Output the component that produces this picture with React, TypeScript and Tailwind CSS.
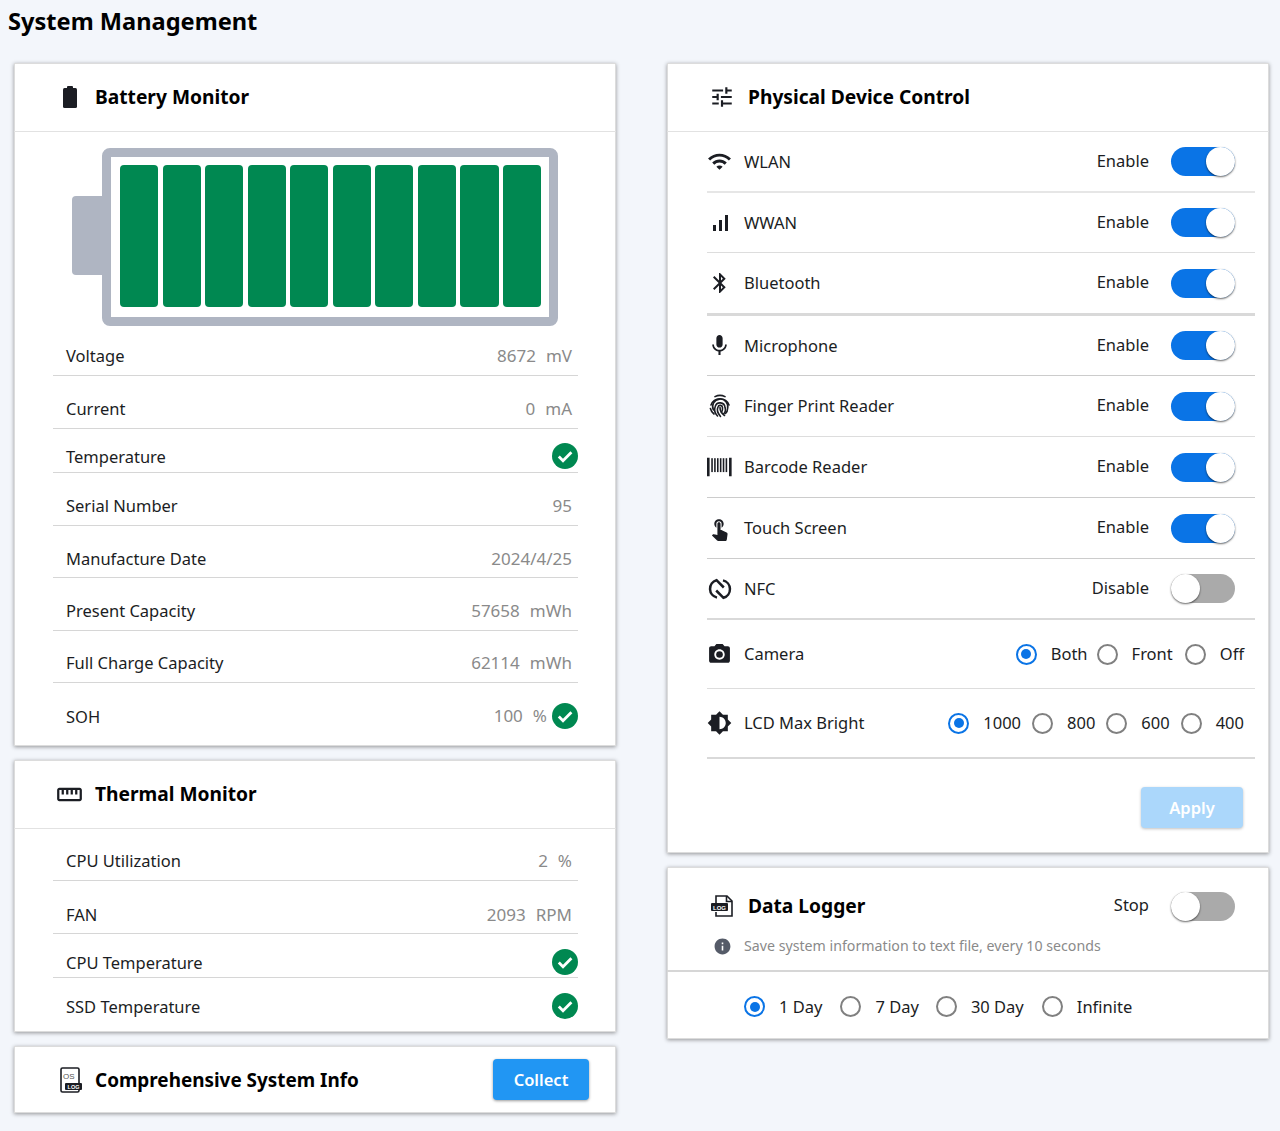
import type { ReactNode } from "react";
import {
  MdBluetooth,
  MdBrightnessMedium,
  MdInfo,
  MdMic,
  MdOutlineStraighten,
  MdPhotoCamera,
  MdSignalCellularAlt,
  MdTouchApp,
  MdTune,
  MdWifi,
} from "react-icons/md";

const BatteryIcon = () => (
  <svg width="16" height="22" viewBox="0 0 16 22" fill="#1b1d23">
    <rect x="5" y="0" width="6" height="4" rx="1" />
    <rect x="1" y="2" width="14" height="20" rx="1.5" />
  </svg>
);

const BarcodeIcon = () => (
  <svg width="27" height="20" viewBox="0 0 27 20" fill="#1b1d23">
    <rect x="0" y="0" width="2.8" height="20" />
    <rect x="4.6" y="0.5" width="1.7" height="15" />
    <rect x="7.7" y="0.5" width="1.7" height="15" />
    <rect x="10.8" y="0.5" width="1.7" height="15" />
    <rect x="13.9" y="0.5" width="1.7" height="15" />
    <rect x="17" y="0.5" width="1.7" height="15" />
    <rect x="20.1" y="0.5" width="1.7" height="15" />
    <rect x="23.8" y="0" width="2.8" height="20" />
  </svg>
);

const FingerprintIcon = () => (
  <svg width="24" height="24" viewBox="0 0 24 24" fill="none" stroke="#1b1d23" strokeWidth="1.6" strokeLinecap="round">
    <path d="M7 2.6A11 11 0 0 1 17 2.6" />
    <path d="M3 11A9.6 9.6 0 0 1 21 11" />
    <path d="M2.4 14.5A10 10 0 0 0 6 20" />
    <path d="M5.4 16A7.6 7.6 0 1 1 19.6 14.5A7 7 0 0 1 17.5 19.5" />
    <path d="M9.5 22A9 9 0 0 1 7.2 12.5A5 5 0 0 1 17 13.5A6 6 0 0 1 15.5 20" />
    <path d="M12.5 22.5C9.5 19 9 15 10 13A2.3 2.3 0 0 1 14.5 13.5C14.8 16 14 17.5 13.5 18.5" />
    <path d="M12 13.5C12 16.5 13.5 19.5 16.5 21.5" />
  </svg>
);

const NfcIcon = () => (
  <svg width="24" height="24" viewBox="0 0 24 24" fill="none" stroke="#1b1d23" strokeWidth="2.5">
    <path d="M9 20.6A9 9 0 0 1 8.5 3.2L15.8 10.5" />
    <path d="M15 3.4A9 9 0 0 1 15.5 20.8L8.2 13.5" />
  </svg>
);

const LogFileIcon = () => (
  <svg width="24" height="24" viewBox="0 0 24 24">
    <path d="M5 9V2h11l5 5v15H5v-4" fill="none" stroke="#1b1d23" strokeWidth="1.6" />
    <path d="M15.5 2v5.5H21" fill="none" stroke="#1b1d23" strokeWidth="1.6" />
    <rect x="0" y="9" width="17" height="8" rx="1" fill="#1b1d23" />
    <text x="8.5" y="15.5" fontSize="6" fontWeight="700" textAnchor="middle" fill="#fff" fontFamily="Liberation Sans, sans-serif">
      LOG
    </text>
  </svg>
);

const OsLogIcon = () => (
  <svg width="24" height="26" viewBox="0 0 24 26">
    <rect x="3" y="1" width="18" height="24" rx="1.5" fill="none" stroke="#1b1d23" strokeWidth="1.6" />
    <text x="5" y="12" fontSize="8" textAnchor="start" fill="#555" fontFamily="Liberation Sans, sans-serif">
      OS
    </text>
    <rect x="7" y="16" width="17" height="7" rx="1" fill="#1b1d23" />
    <text x="15.5" y="21.6" fontSize="5.5" fontWeight="700" textAnchor="middle" fill="#fff" fontFamily="Liberation Sans, sans-serif">
      LOG
    </text>
  </svg>
);

const Check = () => (
  <svg width="26" height="26" viewBox="0 0 26 26" className="shrink-0">
    <circle cx="13" cy="13" r="13" fill="#008851" />
    <path d="M6.8 13.6l4.2 4.2 8.4-8.6" fill="none" stroke="#fff" strokeWidth="2.8" />
  </svg>
);

const Switch = ({ on }: { on: boolean }) => (
  <div className={`flex h-[29px] w-[64px] items-center rounded-full ${on ? "justify-end bg-[#0a74e6]" : "justify-start bg-[#aaaaaa]"}`}>
    <div className="h-[29px] w-[29px] rounded-full bg-white shadow-[0_1px_2px_rgba(0,0,0,0.6)]" />
  </div>
);

const Radio = ({ on, label, className }: { on?: boolean; label: string; className: string }) => (
  <div className={`flex items-center ${className}`}>
    <div className={`flex h-[21px] w-[21px] items-center justify-center rounded-full border-[2.5px] ${on ? "border-[#0a74e6]" : "border-[#808080]"}`}>
      {on && <div className="h-[10px] w-[10px] rounded-full bg-[#0a74e6]" />}
    </div>
    <span className="ml-[14px] text-[#1b1d23]">{label}</span>
  </div>
);

const Card = ({ className, children }: { className: string; children: ReactNode }) => (
  <section className={`bg-white shadow-[inset_0_0_0_1px_#dcdcdc,0_1px_4px_rgba(0,0,0,0.4)] ${className}`}>{children}</section>
);

const CardHeader = ({ icon, title, iconClass }: { icon: ReactNode; title: string; iconClass: string }) => (
  <div className="flex h-[69px] items-center border-b border-[#e2e2e2]">
    <div className={`flex items-center justify-center ${iconClass}`}>{icon}</div>
    <h2 className="text-[19.2px] font-bold text-black">{title}</h2>
  </div>
);

type StatRow = { label: string; value?: string; unit?: string; check?: boolean; box: string };

const batteryRows: StatRow[] = [
  { label: "Voltage", value: "8672", unit: "mV", box: "h-[50px] pb-[7px]" },
  { label: "Current", value: "0", unit: "mA", box: "h-[53px] pb-[7px]" },
  { label: "Temperature", check: true, box: "h-[44px] pb-[3px]" },
  { label: "Serial Number", value: "95", box: "h-[53px] pb-[7px]" },
  { label: "Manufacture Date", value: "2024/4/25", box: "h-[52px] pb-[6px]" },
  { label: "Present Capacity", value: "57658", unit: "mWh", box: "h-[53px] pb-[7px]" },
  { label: "Full Charge Capacity", value: "62114", unit: "mWh", box: "h-[52px] pb-[7px]" },
];

const thermalRows: StatRow[] = [
  { label: "CPU Utilization", value: "2", unit: "%", box: "h-[52px] pb-[7px]" },
  { label: "FAN", value: "2093", unit: "RPM", box: "h-[53px] pb-[6px]" },
  { label: "CPU Temperature", check: true, box: "h-[44px] pb-[2px]" },
];

const Stat = ({ row }: { row: StatRow }) => (
  <div className={`flex items-end justify-between border-b border-[#d6d6d6] pl-[13px] ${row.box}`}>
    <span className="text-[#1b1d23]">{row.label}</span>
    {row.check ? (
      <Check />
    ) : (
      <span className="flex gap-[10px] pr-[6px] text-[17px] text-[#8a8a8a]">
        <span>{row.value}</span>
        {row.unit && <span>{row.unit}</span>}
      </span>
    )}
  </div>
);

const Battery = () => (
  <div className="flex items-center pl-[58px] pt-[16px]">
    <div className="mb-[3px] h-[79px] w-[30px] rounded-l-[4px] bg-[#afb5c2]" />
    <div className="h-[178px] w-[456px] rounded-[8px] border-[9px] border-[#afb5c2] pb-[10px] pl-[9px] pr-[8px] pt-[8px]">
      <div className="flex h-full gap-[4.4px]">
        {Array.from({ length: 10 }).map((_, i) => (
          <div key={i} className="flex-1 rounded-[4px] bg-[#008851]" />
        ))}
      </div>
    </div>
  </div>
);

type DeviceRow = { icon: ReactNode; label: string; on: boolean; box: string };

const devices: DeviceRow[] = [
  { icon: <MdWifi size={25} />, label: "WLAN", on: true, box: "h-[61px] border-b-2 border-[#e6e6e6]" },
  { icon: <MdSignalCellularAlt size={24} />, label: "WWAN", on: true, box: "h-[60px] border-b border-[#dddddd]" },
  { icon: <MdBluetooth size={24} />, label: "Bluetooth", on: true, box: "h-[63px] border-b-[3px] border-[#d9d9d9]" },
  { icon: <MdMic size={25} />, label: "Microphone", on: true, box: "h-[60px] border-b border-[#cccccc]" },
  { icon: <FingerprintIcon />, label: "Finger Print Reader", on: true, box: "h-[61px] border-b border-[#dddddd]" },
  { icon: <BarcodeIcon />, label: "Barcode Reader", on: true, box: "h-[61px] border-b border-[#cccccc]" },
  { icon: <MdTouchApp size={25} />, label: "Touch Screen", on: true, box: "h-[61px] border-b border-[#cccccc]" },
  { icon: <NfcIcon />, label: "NFC", on: false, box: "h-[61px] border-b-2 border-[#d9d9d9]" },
];

const DeviceLabel = ({ icon, label }: { icon: ReactNode; label: string }) => (
  <>
    <div className="flex w-[37px] justify-start text-[#1b1d23]">
      <div className="flex w-[25px] justify-center">{icon}</div>
    </div>
    <span className="text-[#1b1d23]">{label}</span>
  </>
);

export default function App() {
  return (
    <div className="min-h-[1131px] bg-[#f3f6fb] font-['Noto_Sans',sans-serif] text-[16.5px] leading-[24px]">
      <h1 className="h-[63px] pl-2 pt-[4px] text-[23.6px] font-bold leading-[34px] text-black">System Management</h1>
      <div className="flex pl-[14px] pr-[11px]">
        <div className="flex w-[602px] flex-col gap-[14px]">
          <Card className="h-[683px]">
            <CardHeader icon={<BatteryIcon />} title="Battery Monitor" iconClass="w-[81px] pl-[30px]" />
            <Battery />
            <div className="pl-[39px] pr-[38px]">
              {batteryRows.map((row) => (
                <Stat key={row.label} row={row} />
              ))}
              <div className="flex h-[63px] items-center justify-between pl-[13px] pt-[2px]">
                <span className="pt-[2px] text-[#1b1d23]">SOH</span>
                <div className="flex items-center gap-[5px] text-[17px] text-[#8a8a8a]">
                  <span className="flex gap-[10px]">
                    <span>100</span>
                    <span>%</span>
                  </span>
                  <Check />
                </div>
              </div>
            </div>
          </Card>
          <Card className="h-[272px]">
            <CardHeader icon={<MdOutlineStraighten size={27} color="#1b1d23" />} title="Thermal Monitor" iconClass="w-[81px] pl-[30px]" />
            <div className="pl-[39px] pr-[38px]">
              {thermalRows.map((row) => (
                <Stat key={row.label} row={row} />
              ))}
              <div className="flex h-[52px] items-center justify-between pl-[13px] pt-[3px]">
                <span className="pt-[3px] text-[#1b1d23]">SSD Temperature</span>
                <Check />
              </div>
            </div>
          </Card>
          <Card className="flex h-[67px] items-center justify-between pr-[27px]">
            <div className="flex items-center">
              <div className="flex w-[81px] justify-center pl-[30px]">
                <OsLogIcon />
              </div>
              <h2 className="text-[18.9px] font-bold text-black">Comprehensive System Info</h2>
            </div>
            <button className="h-[41px] w-[96px] rounded-[4px] bg-[#2196f3] font-semibold text-white shadow-[0_1px_3px_rgba(0,0,0,0.4)]">
              Collect
            </button>
          </Card>
        </div>

        <div className="ml-[51px] flex w-[602px] flex-col gap-[14px]">
          <Card className="h-[790px]">
            <CardHeader icon={<MdTune size={26} color="#1b1d23" />} title="Physical Device Control" iconClass="w-[81px] pl-[28px]" />
            <div className="pl-[40px] pr-[14px]">
              {devices.map((d) => (
                <div key={d.label} className={`flex items-center pr-[20px] ${d.box}`}>
                  <DeviceLabel icon={d.icon} label={d.label} />
                  <span className="mb-[2px] ml-auto mr-[22px] text-[#1b1d23]">{d.on ? "Enable" : "Disable"}</span>
                  <Switch on={d.on} />
                </div>
              ))}
              <div className="flex h-[69px] items-center border-b border-[#dddddd] pr-[11px]">
                <DeviceLabel icon={<MdPhotoCamera size={25} />} label="Camera" />
                <div className="ml-auto flex">
                  <Radio on label="Both" className="mr-[9px]" />
                  <Radio label="Front" className="mr-[12px]" />
                  <Radio label="Off" className="" />
                </div>
              </div>
              <div className="flex h-[70px] items-center border-b-2 border-[#d9d9d9] pr-[11px]">
                <DeviceLabel icon={<MdBrightnessMedium size={26} />} label="LCD Max Bright" />
                <div className="ml-auto flex">
                  <Radio on label="1000" className="mr-[11px]" />
                  <Radio label="800" className="mr-[11px]" />
                  <Radio label="600" className="mr-[11px]" />
                  <Radio label="400" className="" />
                </div>
              </div>
              <div className="flex justify-end pr-[12px] pt-[28px]">
                <button className="h-[41px] w-[102px] rounded-[4px] bg-[#abd7fb] font-semibold text-white shadow-[0_1px_3px_rgba(0,0,0,0.25)]">
                  Apply
                </button>
              </div>
            </div>
          </Card>
          <Card className="h-[172px]">
            <div className="h-[105px] border-b-2 border-[#d6d6d6] pt-[22px]">
              <div className="flex h-[34px] items-center pl-[44px] pr-[34px]">
                <LogFileIcon />
                <h2 className="ml-[13px] text-[19.2px] font-bold text-black">Data Logger</h2>
                <span className="mb-[2px] ml-auto mr-[22px] text-[#1b1d23]">Stop</span>
                <Switch on={false} />
              </div>
              <div className="mt-[13px] flex items-center pl-[46px] text-[14.2px] leading-[20px] text-[#8a8a8a]">
                <MdInfo size={19} color="#555b68" />
                <span className="ml-[12px]">Save system information to text file, every 10 seconds</span>
              </div>
            </div>
            <div className="flex h-[65px] items-center pl-[77px] pt-[4px]">
              <Radio on label="1 Day" className="mr-[18px]" />
              <Radio label="7 Day" className="mr-[17px]" />
              <Radio label="30 Day" className="mr-[18px]" />
              <Radio label="Infinite" className="" />
            </div>
          </Card>
        </div>
      </div>
    </div>
  );
}
